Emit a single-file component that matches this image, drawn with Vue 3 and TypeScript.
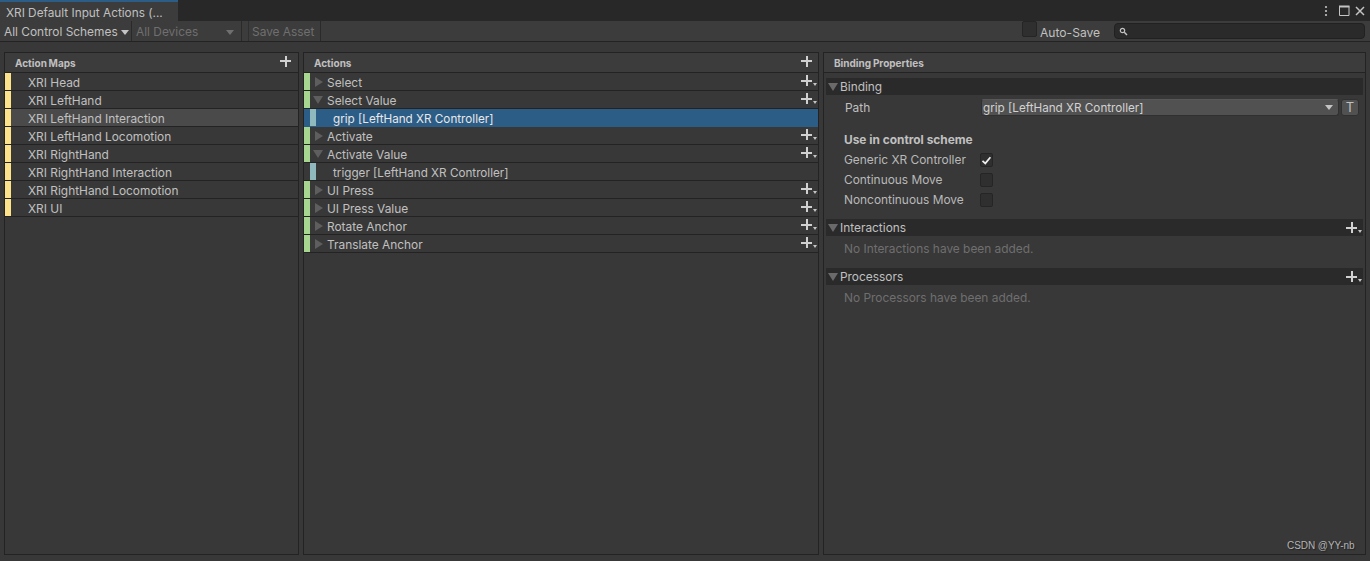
<script setup lang="ts">
const maps = ['XRI Head','XRI LeftHand','XRI LeftHand Interaction','XRI LeftHand Locomotion','XRI RightHand','XRI RightHand Interaction','XRI RightHand Locomotion','XRI UI'];
type Row = { label: string; kind: 'action' | 'binding'; open?: boolean; selected?: boolean };
const actions: Row[] = [
  { label: 'Select', kind: 'action' },
  { label: 'Select Value', kind: 'action', open: true },
  { label: 'grip [LeftHand XR Controller]', kind: 'binding', selected: true },
  { label: 'Activate', kind: 'action' },
  { label: 'Activate Value', kind: 'action', open: true },
  { label: 'trigger [LeftHand XR Controller]', kind: 'binding' },
  { label: 'UI Press', kind: 'action' },
  { label: 'UI Press Value', kind: 'action' },
  { label: 'Rotate Anchor', kind: 'action' },
  { label: 'Translate Anchor', kind: 'action' },
];
const schemes = [
  { label: 'Generic XR Controller', on: true },
  { label: 'Continuous Move', on: false },
  { label: 'Noncontinuous Move', on: false },
];
</script>

<template>
  <div class="window">
    <div class="tabbar">
      <div class="tab">XRI Default Input Actions (...</div>
      <div class="winicons">
        <svg class="dots" width="12" height="12" viewBox="0 0 12 12"><circle cx="6" cy="2" r="1.1" /><circle cx="6" cy="6" r="1.1" /><circle cx="6" cy="10" r="1.1" /></svg>
        <svg width="11" height="11" viewBox="0 0 11 11" class="stroke"><path d="M.5 1.5h9.5v9h-9.5z" /><path d="M0 1.5h10.5" stroke-width="2"/></svg>
        <svg width="10" height="10" viewBox="0 0 10 10" class="stroke"><path d="M1 1l8 8M9 1l-8 8" stroke-width="1.5"/></svg>
      </div>
    </div>
    <div class="toolbar">
      <div class="tool schemes">All Control Schemes<i class="caret light"></i></div>
      <div class="tool devices">All Devices<i class="caret"></i></div>
      <div class="tool save">Save Asset</div>
      <div class="spacer"></div>
      <div class="autosave"><span class="check"></span><span>Auto-Save</span></div>
      <div class="search">
        <svg width="9" height="9" viewBox="0 0 9 9" class="stroke"><circle cx="3.5" cy="3.5" r="2.2" stroke-width="1.2"/><path d="M5.3 5.3L8 8" stroke-width="1.5"/></svg>
      </div>
    </div>
    <div class="panes">
      <section class="pane maps">
        <header class="panehead"><span>Action Maps</span><span class="plus big"></span></header>
        <div v-for="(m, i) in maps" :key="m" class="row" :class="{ hover: i === 2 }">
          <i class="bar yellow"></i><span class="maplabel">{{ m }}</span>
        </div>
      </section>
      <section class="pane acts">
        <header class="panehead"><span>Actions</span><span class="plus big"></span></header>
        <div v-for="a in actions" :key="a.label" class="row" :class="{ selected: a.selected }">
          <template v-if="a.kind === 'action'">
            <i class="bar green"></i>
            <i class="fold" :class="a.open ? 'down' : 'right'"></i>
            <span class="actlabel">{{ a.label }}</span>
            <span class="plus small"><b></b></span>
          </template>
          <template v-else>
            <i class="bar teal"></i><span class="bindlabel">{{ a.label }}</span>
          </template>
        </div>
      </section>
      <section class="pane props">
        <header class="panehead"><span>Binding Properties</span></header>
        <div class="section first"><i class="fold down lit"></i><span>Binding</span></div>
        <div class="pathrow">
          <span class="pathlabel">Path</span>
          <div class="pathfield"><span>grip [LeftHand XR Controller]</span><i class="caret light"></i></div>
          <div class="tbtn">T</div>
        </div>
        <div class="usehead">Use in control scheme</div>
        <div v-for="s in schemes" :key="s.label" class="schemerow">
          <span class="schemelabel">{{ s.label }}</span>
          <span class="check small">
            <svg v-if="s.on" width="11" height="11" viewBox="0 0 11 11" class="stroke white"><path d="M1.5 5.8L4.3 8.4 9.4 2.2" stroke-width="1.7"/></svg>
          </span>
        </div>
        <div class="section gap1"><i class="fold down lit"></i><span>Interactions</span><span class="plus small sec"><b></b></span></div>
        <div class="empty">No Interactions have been added.</div>
        <div class="section gap2"><i class="fold down lit"></i><span>Processors</span><span class="plus small sec"><b></b></span></div>
        <div class="empty">No Processors have been added.</div>
      </section>
    </div>
    <div class="watermark">CSDN @YY-nb</div>
  </div>
</template>

<style>
html, body { margin: 0; background: #383838; }
</style>

<style scoped>
.window { position: relative; width: 1370px; height: 561px; overflow: hidden; background: #383838; color: #c0c0c0; font: 11.9px/18px Inter, "Noto Sans", sans-serif; white-space: nowrap; }
.tabbar { height: 21px; background: #282828; display: flex; justify-content: space-between; }
.tab { width: 172px; padding-left: 6px; height: 19px; line-height: 22px; border-top: 2px solid #2c5d87; background: #3c3c3c; font-size: 11.8px; }
.winicons { display: flex; align-items: center; gap: 5px; padding: 0 5px 0 0; }
.winicons svg { fill: #c4c4c4; }
.winicons .dots { margin-right: 2px; }
.stroke { fill: none !important; stroke: #c4c4c4; }
.stroke.white { stroke: #eeeeee; }
.toolbar { height: 20px; background: #3c3c3c; border-bottom: 1px solid #232323; display: flex; align-items: stretch; line-height: 20px; }
.tool { display: flex; align-items: center; position: relative; border-right: 1px solid #2a2a2a; padding-top: 2px; box-sizing: border-box; }
.schemes { width: 132px; padding-left: 4px; gap: 3px; }
.devices { width: 110px; padding-left: 4px; padding-right: 4px; color: #6f6f6f; justify-content: space-between; }
.save { margin-left: 6px; width: 73px; padding-left: 3px; color: #6f6f6f; border-left: 1px solid #2f2f2f; }
.caret { display: inline-block; width: 0; height: 0; border-left: 4.5px solid transparent; border-right: 4.5px solid transparent; border-top: 5px solid #6f6f6f; margin-right: 3px; }
.caret.light { border-top-color: #c4c4c4; margin-right: 0; }
.spacer { flex: 1; }
.autosave { display: flex; align-items: flex-start; gap: 3px; width: 92px; font-size: 12.1px; }
.autosave span:last-child { margin-top: 2px; }
.check { width: 13px; height: 14px; flex: none; background: #2f2f2f; border: 1px solid #252525; border-radius: 2px; display: flex; align-items: center; justify-content: center; }
.search { height: 14px; margin: 2px 5px 0 0; border: 1px solid #212121; border-radius: 4px; background: #2a2a2a; display: flex; align-items: center; padding-left: 4px; width: 245px; }
.panes { display: flex; gap: 4px; padding: 10px 4px 0 4px; height: 503px; }
.pane { border: 1px solid #232323; box-sizing: border-box; height: 503px; background: #383838; }
.maps { width: 295px; }
.acts { width: 516px; }
.props { width: 543px; }
.panehead { height: 20px; box-sizing: border-box; display: flex; justify-content: space-between; align-items: center; padding: 1px 7px 0 10px; background: #3c3c3c; border-bottom: 1px solid #232323; font-size: 10px; font-weight: 700; word-spacing: -0.6px; }
.panehead .plus { margin-top: -4px; }
.row { height: 18px; box-sizing: border-box; display: flex; align-items: center; position: relative; border-bottom: 1px solid #232323; line-height: 19px; padding-top: 1px; }
.row .bar { margin-top: -1px; height: 17px; }
.row.hover { background: #4a4a4a; }
.row.selected { background: #2c5d87; color: #e8e8e8; border-bottom-color: #2c5d87; }
.bar { width: 6px; flex: none; }
.yellow { background: #fde28c; }
.green { background: #a6d68f; }
.teal { background: #8fb9bd; margin-left: 6px; }
.maplabel { margin-left: 17px; }
.actlabel { margin-left: 4px; }
.bindlabel { margin-left: 17px; font-size: 11.7px; padding-top: 2px; }
.fold { width: 0; height: 0; margin-left: 5px; flex: none; }
.fold.right { border-top: 5px solid transparent; border-bottom: 5px solid transparent; border-left: 8px solid #5e5e5e; }
.fold.down { border-left: 5px solid transparent; border-right: 5px solid transparent; border-top: 8px solid #5e5e5e; margin-left: 3px; }
.fold.down.lit { margin-left: 2px; margin-right: 2px; border-top-color: #6a6a6a; }
.plus { position: relative; display: block; flex: none; width: 11px; height: 11px; background: linear-gradient(#d0d0d0, #d0d0d0) center/11px 2px no-repeat, linear-gradient(#d0d0d0, #d0d0d0) center/2px 11px no-repeat; }
.maps .plus.big { margin-right: 0; }
.acts .plus.big { margin-right: -1px; }
.row .plus.small { position: absolute; right: 6px; top: 2px; }
.plus.small b { position: absolute; left: 12px; top: 8px; width: 0; height: 0; border-left: 2.5px solid transparent; border-right: 2.5px solid transparent; border-top: 3px solid #c4c4c4; }
.section { position: relative; display: flex; align-items: center; height: 17px; background: #2a2a2a; margin: 0 2px 0 2px; padding-top: 1px; box-sizing: border-box; }
.section.first { margin-top: 5px; }
.gap1 { margin-top: 10px; }
.gap2 { margin-top: 10px; }
.section .plus.sec { position: absolute; right: 6px; top: 3px; }
.pathrow { display: flex; align-items: center; height: 20px; margin-top: 2px; padding-left: 21px; }
.pathlabel { width: 136px; padding-top: 1px; }
.pathfield { width: 358px; height: 17px; background: #515151; border-radius: 3px; border: 1px solid #303030; border-top-color: #585858; box-sizing: border-box; padding: 1px 5px 0 1px; display: flex; align-items: center; justify-content: space-between; color: #d2d2d2; font-size: 11.7px; }
.tbtn { width: 18px; height: 17px; margin-left: 2px; border-radius: 3px; background: #515151; border: 1px solid #303030; box-sizing: border-box; text-align: center; line-height: 15px; font-size: 13px; }
.usehead { margin: 14px 0 0 20px; font-weight: 700; height: 18px; }
.schemerow { display: flex; align-items: center; height: 20px; padding-left: 20px; position: relative; top: 1px; }
.schemelabel { width: 136px; color: #b8b8b8; }
.check.small { width: 11px; height: 12px; }
.empty { padding-left: 20px; color: #6f6f6f; height: 22px; line-height: 26px; }
.watermark { position: absolute; left: 1287px; top: 538px; font: 10px/16px "Liberation Sans", sans-serif; letter-spacing: -0.05px; color: #b4b4b4; text-shadow: 1px 1px 1px #222; }
</style>
